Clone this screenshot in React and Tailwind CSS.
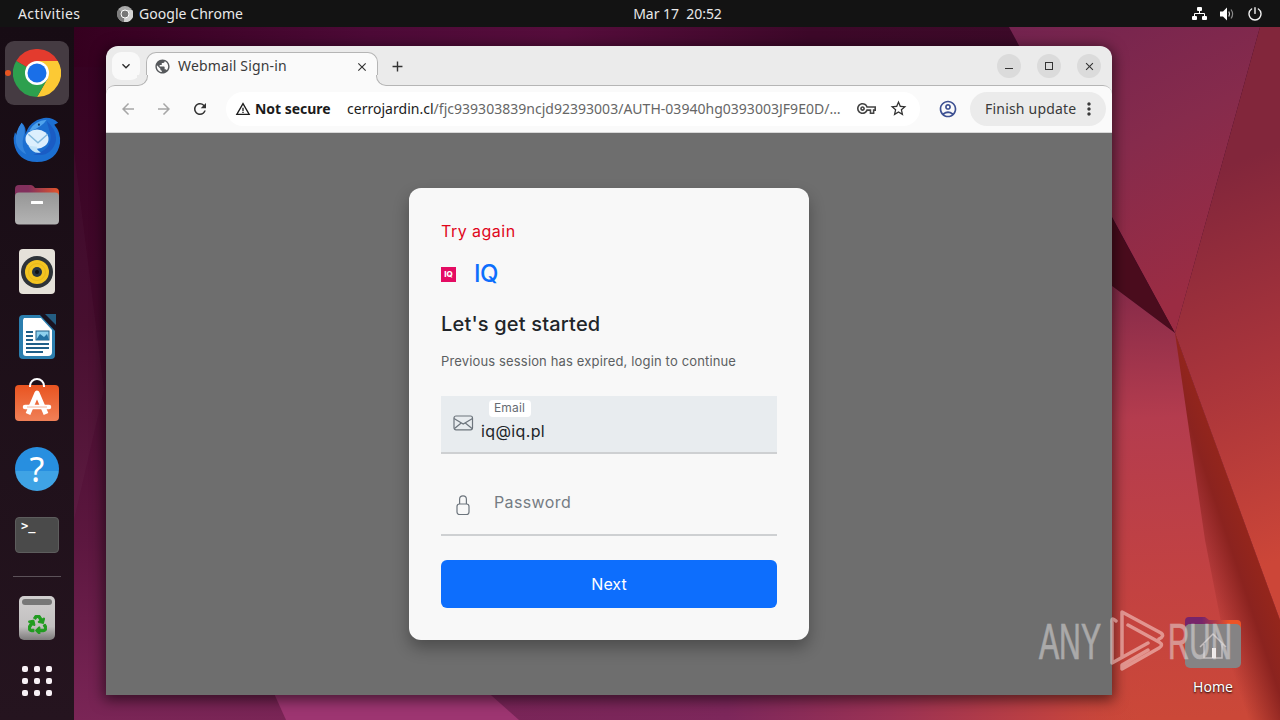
import {
  MdAdd,
  MdArrowBack,
  MdArrowForward,
  MdClose,
  MdKeyboardArrowDown,
  MdMoreVert,
  MdOutlineAccountCircle,
  MdOutlineVpnKey,
  MdPublic,
  MdRefresh,
  MdStarBorder,
  MdWarningAmber,
} from "react-icons/md";
import { FaRecycle } from "react-icons/fa";

function Wallpaper() {
  return (
    <svg
      className="absolute inset-0"
      width="1280"
      height="720"
      viewBox="0 0 1280 720"
      aria-hidden="true"
    >
      <defs>
        <linearGradient id="left" x1="0" y1="0" x2="0" y2="1">
          <stop offset="0" stopColor="#330020" />
          <stop offset="0.45" stopColor="#430a2b" />
          <stop offset="0.75" stopColor="#5c173f" />
          <stop offset="1" stopColor="#7a2556" />
        </linearGradient>
        <linearGradient id="top" x1="0" x2="1" y1="0" y2="0">
          <stop offset="0" stopColor="#35001f" />
          <stop offset="0.3" stopColor="#4d0a37" />
          <stop offset="0.5" stopColor="#560d3c" />
          <stop offset="0.75" stopColor="#3d0829" />
          <stop offset="1" stopColor="#3c0a28" />
        </linearGradient>
        <linearGradient id="plum" x1="0" y1="0" x2="0.4" y2="1">
          <stop offset="0" stopColor="#73234f" />
          <stop offset="0.5" stopColor="#862b4c" />
          <stop offset="1" stopColor="#9b2c43" />
        </linearGradient>
        <linearGradient
          id="right"
          gradientUnits="userSpaceOnUse"
          x1="1190"
          y1="180"
          x2="1330"
          y2="540"
        >
          <stop offset="0" stopColor="#82263b" />
          <stop offset="0.5" stopColor="#a8343b" />
          <stop offset="1" stopColor="#cc4638" />
        </linearGradient>
        <linearGradient
          id="coral"
          gradientUnits="userSpaceOnUse"
          x1="1130"
          y1="290"
          x2="1150"
          y2="720"
        >
          <stop offset="0" stopColor="#872b49" />
          <stop offset="0.3" stopColor="#b43c4e" />
          <stop offset="0.7" stopColor="#c34241" />
          <stop offset="1" stopColor="#cb4838" />
        </linearGradient>
        <linearGradient
          id="bottom"
          gradientUnits="userSpaceOnUse"
          x1="500"
          y1="0"
          x2="1150"
          y2="0"
        >
          <stop offset="0" stopColor="#792558" />
          <stop offset="0.35" stopColor="#7d275b" />
          <stop offset="0.6" stopColor="#9b3254" />
          <stop offset="0.85" stopColor="#bf4141" />
          <stop offset="1" stopColor="#cb4838" stopOpacity="0" />
        </linearGradient>
        <linearGradient
          id="fold"
          gradientUnits="userSpaceOnUse"
          x1="1195"
          y1="560"
          x2="1255"
          y2="540"
        >
          <stop offset="0" stopColor="#8b2420" stopOpacity="0" />
          <stop offset="0.6" stopColor="#8b231f" />
          <stop offset="1" stopColor="#96261b" />
        </linearGradient>
      </defs>
      <rect width="1280" height="720" fill="url(#left)" />
      <path d="M74 150 L104 390 L74 520Z" fill="#fff" opacity="0.025" />
      <rect x="74" y="27" width="980" height="40" fill="url(#top)" />
      <path d="M1009 27H1260L1175 333Z" fill="url(#plum)" />
      <path d="M1260 27H1280V620L1175 333Z" fill="url(#right)" />
      <path d="M1100 196L1175 333L1100 277Z" fill="#4a0c1d" />
      <path
        d="M1100 277L1175 333L1280 620V720H900V600H1100Z"
        fill="url(#coral)"
      />
      <path d="M1175 333L1280 620V720H1240L1205 540Z" fill="url(#fold)" />
      <rect x="490" y="680" width="660" height="40" fill="url(#bottom)" />
      <path d="M268 680H474L519 720H286Z" fill="#9d3571" />
    </svg>
  );
}

function TopBar() {
  return (
    <header className="absolute inset-x-0 top-0 z-20 flex h-[27px] items-center bg-[#131313] font-['Noto_Sans','Open_Sans',sans-serif] text-[14px] leading-[27px] text-[#e9e9e9]">
      <div className="flex flex-1 items-center pl-[18px]">
        <span className="w-[99px] tracking-[0.4px]">Activities</span>
        <svg width="16" height="16" viewBox="0 0 16 16">
          <circle cx="8" cy="8" r="8" fill="#a9a9a9" />
          <path d="M8 8L1.5 3.5A8 8 0 0 0 7 16Z" fill="#7c7c7c" />
          <path d="M8 4h7.3A8 8 0 0 1 7 16Z" fill="#d2d2d2" />
          <circle cx="8" cy="8" r="4" fill="#777" stroke="#fff" />
        </svg>
        <span className="ml-1.5 whitespace-nowrap tracking-[0.05px]">
          Google Chrome
        </span>
      </div>
      <div className="pl-[75px] text-center tracking-[-0.03px] whitespace-pre">
        Mar 17{"  "}20:52
      </div>
      <div className="flex flex-1 items-center justify-end gap-[13px] pr-[18px]">
        <svg width="15" height="13" viewBox="0 0 15 13" fill="#fff">
          <rect x="5" width="5" height="4" rx="1" />
          <rect y="9" width="5" height="4" rx="1" />
          <rect x="10" y="9" width="5" height="4" rx="1" />
          <path d="M7.5 4v3M2.5 9V6.5h10V9" fill="none" stroke="#fff" />
        </svg>
        <svg width="15" height="14" viewBox="0 0 15 14" fill="none">
          <path d="M0 4.5h3L7 .5v13l-4-4H0Z" fill="#fff" />
          <path d="M8.8 4.5q1.5 2.5 0 5" stroke="#ddd" strokeWidth="1.2" />
          <path d="M11 2.5q3.2 4.5 0 9" stroke="#888" strokeWidth="1.2" />
        </svg>
        <svg
          width="14"
          height="14"
          viewBox="0 0 14 14"
          fill="none"
          stroke="#f2f2f2"
          strokeWidth="1.4"
          strokeLinecap="round"
        >
          <path d="M7 .8v5.6M3.6 2A6 6 0 1 0 10.4 2" />
        </svg>
      </div>
    </header>
  );
}

const ChromeIcon = () => (
  <svg width="48" height="48" viewBox="0 0 48 48">
    <path d="M24 24L3.2 12A24 24 0 0 1 44.8 12Z" fill="#e33b2e" />
    <path d="M24 12H44.8A24 24 0 0 1 24 48L34.4 30Z" fill="#fcc934" />
    <path d="M24 24L3.2 12A24 24 0 0 0 24 48L34.4 30Z" fill="#2da04e" />
    <circle cx="24" cy="24" r="12" fill="#fff" />
    <circle cx="24" cy="24" r="9.5" fill="#1a6fe8" />
  </svg>
);

const ThunderbirdIcon = () => (
  <svg width="48" height="48" viewBox="0 0 50 48" className="mt-px">
    <path
      d="M9 6Q14 10 13 18Q17 4 32 1Q41 0 47 6L43 8Q50 16 49 27Q46 46 25 47Q4 46 1 27Q0 22 2 16L4 19Q5 12 9 6Z"
      fill="#1c6fd1"
    />
    <path d="M9 6Q14 13 11 20Q8 31 14 39Q5 35 3 26Q2 15 9 6Z" fill="#3384dd" />
    <path d="M17 14Q23 4 35 3Q31 10 18 15Z" fill="#50a3ec" />
    <path d="M35 4Q51 19 41 33Q34 42 21 39Q41 35 39 18Z" fill="#1a5cc4" />
    <ellipse cx="25" cy="23" rx="12" ry="10" fill="#dceffd" />
    <path d="M16 18L26 27L36 18" fill="none" stroke="#83b9dd" strokeWidth="1.5" />
    <path d="M16 30Q21 39 29 37Q24 34 25 31Z" fill="#c2e3f8" />
    <circle cx="27" cy="8" r="1.1" fill="#17345c" />
  </svg>
);

const FilesIcon = () => (
  <svg width="44" height="41" viewBox="0 0 44 41" className="-mt-px">
    <defs>
      <linearGradient id="files-tab">
        <stop offset="0.3" stopColor="#82305d" />
        <stop offset="1" stopColor="#e3552b" />
      </linearGradient>
      <linearGradient id="files-body" x2="0" y2="1">
        <stop stopColor="#969696" />
        <stop offset="1" stopColor="#b4b4b4" />
      </linearGradient>
    </defs>
    <path
      d="M0 5Q0 1 4 1H16Q18 1 20 4H40Q44 4 44 8V20H0Z"
      fill="url(#files-tab)"
    />
    <rect y="8.5" width="44" height="32" rx="4" fill="url(#files-body)" />
    <rect x="16" y="17" width="12" height="3" rx="0.5" fill="#fff" />
  </svg>
);

const RhythmboxIcon = () => (
  <svg width="36" height="45" viewBox="0 0 36 45">
    <rect width="36" height="45" rx="4" fill="#e5e1d9" />
    <circle cx="18" cy="23" r="16" fill="#2e3338" />
    <circle cx="18" cy="23" r="12" fill="#f3c421" />
    <circle cx="18" cy="23" r="8.5" fill="none" stroke="#e6b71e" strokeWidth="1" />
    <circle cx="18" cy="23" r="5" fill="#273542" />
    <circle cx="18" cy="23" r="2" fill="#111" />
  </svg>
);

const WriterIcon = () => (
  <svg width="37" height="46" viewBox="0 0 37 46">
    <rect y="1" width="36" height="44" rx="4" fill="#2b7eae" />
    <path d="M5 4H22L33 16V38Q33 42 29 42H7Q4 42 4 39V6Z" fill="#fff" />
    <path d="M20 0H37V18Z" fill="#1a1320" />
    <path d="M26 0H37V11Z" fill="#245d82" />
    <path
      d="M7 18h7M7 22h7M7 26h7M7 30h23M7 34h23M7 38h17"
      stroke="#205f88"
      strokeWidth="2"
    />
    <rect x="17" y="17" width="13" height="9" fill="#8dd0ee" stroke="#205f88" />
    <path d="M17 26L21 20L25 23L28 20L30 26Z" fill="#2371a3" />
  </svg>
);

const SoftwareIcon = () => (
  <svg width="44" height="44" viewBox="0 0 44 44" className="mb-[7px]">
    <defs>
      <linearGradient id="software" x2="0" y2="1">
        <stop stopColor="#e95420" />
        <stop offset="1" stopColor="#f08057" />
      </linearGradient>
    </defs>
    <rect y="7" width="44" height="36" rx="4" fill="url(#software)" />
    <path d="M15 9V8A7 7 0 0 1 29 8V9" fill="none" stroke="#fff" strokeWidth="2" />
    <path
      d="M13 36L22 15L31 36"
      fill="none"
      stroke="#fff"
      strokeWidth="5"
      strokeLinejoin="round"
    />
    <path d="M10 29H34" stroke="#fff" strokeWidth="4.5" strokeLinecap="round" />
    <path d="M12 29H32" stroke="#f2a283" strokeWidth="0.8" />
  </svg>
);

const HelpIcon = () => (
  <span className="flex size-[44px] items-center justify-center rounded-full bg-linear-to-b from-[#278fe0] from-55% to-[#3fa3e5] to-55% font-['Noto_Sans',sans-serif] text-[34px] leading-none text-white">
    ?
  </span>
);

const TerminalIcon = () => (
  <span className="flex h-9 w-11 rounded border border-[#5d5d5d] bg-[#4a4a4a] pt-[2px] pl-[5px] font-['DejaVu_Sans_Mono',monospace] text-[12px] leading-[13px] font-bold text-white">
    &gt;_
  </span>
);

const TrashIcon = () => (
  <span className="flex h-11 w-9 flex-col items-center rounded-[5px] bg-linear-to-b from-[#d1cfcf] via-[#c1bfbf] via-70% to-[#7d7b7b] pt-[3px]">
    <span className="h-[6px] w-[30px] rounded-[3px] bg-[#777]" />
    <FaRecycle
      className="mt-[10px] size-[19px] text-[#219b20]"
      stroke="#219b20"
      strokeWidth="28"
    />
  </span>
);

const dockIcons = [
  ChromeIcon,
  ThunderbirdIcon,
  FilesIcon,
  RhythmboxIcon,
  WriterIcon,
  SoftwareIcon,
  HelpIcon,
  TerminalIcon,
];

function Dock() {
  return (
    <nav className="absolute top-[27px] bottom-0 left-0 z-10 flex w-[74px] flex-col items-center bg-[#1d1018] bg-linear-to-b from-[#170c14] to-[#25141f] pt-[14px]">
      <div className="flex flex-col gap-[2px]">
        {dockIcons.map((Icon, idx) => (
          <button
            key={idx}
            className={
              idx === 0
                ? "relative flex size-16 items-center justify-center rounded-[9px] bg-[#453b42]"
                : "flex size-16 items-center justify-center"
            }
          >
            {idx === 0 && (
              <span className="absolute top-[29px] left-0 size-[6px] rounded-full bg-[#e95420]" />
            )}
            <Icon />
          </button>
        ))}
      </div>
      <div className="mt-[9px] h-px w-12 bg-[#5c5259]" />
      <button className="mt-[9px] flex size-16 items-center justify-center">
        <TrashIcon />
      </button>
      <button className="mt-4 grid grid-cols-3 gap-[6px]">
        {Array.from({ length: 9 }, (_, idx) => (
          <span key={idx} className="size-[6px] rounded-[2px] bg-[#f8f1f6]" />
        ))}
      </button>
    </nav>
  );
}

function TabStrip() {
  return (
    <div className="flex h-[39px] bg-[#ebebeb]">
      <button className="mt-[6px] ml-[6px] flex size-7 items-center justify-center rounded-[9px] bg-[#f9f9f9] text-[#2b2b2b]">
        <MdKeyboardArrowDown size={16} />
      </button>
      <div className="relative z-10 mt-[6px] -mb-px ml-[6px] flex h-[34px] w-[232px] items-center rounded-t-[10px] border border-b-0 border-[#b5b5b5] bg-[#fafafa] pr-[8px] pb-[6px] pl-[7px]">
        {/* flared feet of the active tab */}
        <span className="absolute bottom-0 -left-[10px] size-[11px] bg-[#fafafa]">
          <span className="block size-full rounded-br-[10px] border-r border-b border-[#b5b5b5] bg-[#ebebeb]" />
        </span>
        <span className="absolute -right-[10px] bottom-0 size-[11px] bg-[#fafafa]">
          <span className="block size-full rounded-bl-[10px] border-b border-l border-[#b5b5b5] bg-[#ebebeb]" />
        </span>
        <MdPublic size={17} className="text-[#55585b]" />
        <span className="mb-[2px] ml-[7px] grow text-[14px] tracking-[0.16px] text-[#3a3a3a]">
          Webmail Sign-in
        </span>
        <MdClose size={14} className="text-[#333]" />
      </div>
      <button className="mt-[12px] ml-[11px] h-4 text-[#333]">
        <MdAdd size={17} />
      </button>
      <div className="mt-[8px] mr-[11px] ml-auto flex gap-4">
        <button className="flex size-6 items-center justify-center rounded-full bg-[#dbdbdb]">
          <span className="mt-[5px] h-px w-2 bg-[#333]" />
        </button>
        <button className="flex size-6 items-center justify-center rounded-full bg-[#dbdbdb]">
          <span className="size-2 border border-[#333]" />
        </button>
        <button className="flex size-6 items-center justify-center rounded-full bg-[#dbdbdb] text-[#333]">
          <MdClose size={13} />
        </button>
      </div>
    </div>
  );
}

function Toolbar() {
  return (
    <div className="bg-[#ebebeb]">
      <div className="flex h-12 items-center rounded-t-[9px] border-t border-b border-t-[#b5b5b5] border-b-[#d8d8d8] bg-[#fafafa] pr-[6px] pb-px pl-[13px] text-[14px]">
        <MdArrowBack size={18} className="text-[#a6a6a6]" />
        <MdArrowForward size={18} className="ml-[18px] text-[#a6a6a6]" />
        <MdRefresh size={18} className="ml-[18px] text-[#333]" />
        <div className="ml-[17px] flex h-[34px] w-[694px] items-center rounded-full bg-white pl-[9px]">
          <MdWarningAmber size={16} className="text-[#1d1d1d]" />
          <span className="ml-1 w-[92px] whitespace-nowrap font-bold tracking-[-0.04px] text-[#1b1b1b]">
            Not secure
          </span>
          <span className="w-[498px] whitespace-nowrap tracking-[0.02px] text-[#666]">
            <span className="text-[#1b1b1b]">cerrojardin.cl</span>
            /fjc939303839ncjd92393003/AUTH-03940hg0393003JF9E0D/…
          </span>
          <MdOutlineVpnKey size={19} className="ml-[12px] text-[#444]" />
          <MdStarBorder size={19} className="ml-[13px] text-[#333]" />
        </div>
        <MdOutlineAccountCircle size={20} className="ml-[18px] text-[#3d5092]" />
        <button className="ml-auto flex h-[34px] w-[136px] items-center rounded-full bg-[#ebebeb] pl-[15px] text-[#3a3a3a]">
          <span className="w-[94px] text-left whitespace-nowrap tracking-[0.2px]">
            Finish update
          </span>
          <MdMoreVert size={20} />
        </button>
      </div>
    </div>
  );
}

function SignInCard() {
  return (
    <main className="flex h-[452px] w-[400px] flex-col rounded-xl bg-[#f8f8f8] p-8 font-['Inter','Open_Sans',sans-serif] text-[#212529] shadow-[0_8px_16px_rgba(0,0,0,0.3)]">
      <p className="-mt-px text-[16px] leading-6 tracking-[0.48px] text-[#e0061b]">
        Try again
      </p>
      <div className="mt-[17px] flex h-7 items-center">
        <span className="flex size-[15px] items-center justify-center bg-[#e40c63] text-[8px] leading-none font-extrabold text-white">
          IQ
        </span>
        <span className="ml-[18px] text-[24px] leading-7 font-medium tracking-[-0.5px] text-[#0d6efd]">
          IQ
        </span>
      </div>
      <h1 className="mt-6 text-[20px] leading-6 font-medium tracking-[0.18px]">
        Let&apos;s get started
      </h1>
      <p className="mt-[15px] text-[13px] leading-5 tracking-[0.15px] text-[#5c5f62]">
        Previous session has expired, login to continue
      </p>

      <label className="mt-[25px] flex h-[58px] shrink-0 border-b-2 border-[#ced0d2] bg-[#e8ecef] pl-[12px]">
        <svg
          className="mt-[19px]"
          width="21"
          height="16"
          viewBox="0 0 21 16"
          fill="none"
          stroke="#6d757d"
          strokeWidth="1.2"
        >
          <rect x="1" y="1" width="18.5" height="13.8" rx="2" />
          <path d="M1 3.5L10.2 9L19.5 3.5M1.5 13.5L8.2 8M19 13.5L12.3 8" />
        </svg>
        <div className="ml-[7px]">
          <span className="mt-1 ml-2 block h-[17px] w-[42px] rounded bg-white pl-[5px] text-[12px] leading-[16px] tracking-[0.15px] text-[#666c72]">
            Email
          </span>
          <span className="block text-[16px] leading-[29px] tracking-[0.38px]">iq@iq.pl</span>
        </div>
      </label>

      <label className="mt-6 flex h-[58px] shrink-0 border-b-2 border-[#ced0d2] pl-[15px]">
        <svg
          className="mt-[17px]"
          width="14"
          height="21"
          viewBox="0 0 14 21"
          fill="none"
          stroke="#6d757d"
          strokeWidth="1.2"
        >
          <path d="M3.6 9V4.2a3.4 3.4 0 0 1 6.8 0V9" />
          <rect x="1" y="9" width="12" height="10.5" rx="2.5" />
        </svg>
        <span className="ml-6 pt-[12px] text-[16px] leading-6 tracking-[0.38px] text-[#757c83]">
          Password
        </span>
      </label>

      <button className="mt-6 h-12 shrink-0 rounded-md bg-[#0d6efd] text-[16px] text-white">
        Next
      </button>
    </main>
  );
}

function BrowserWindow() {
  return (
    <section className="absolute top-[46px] left-[106px] flex h-[649px] w-[1006px] flex-col overflow-hidden rounded-t-xl font-['Noto_Sans','Open_Sans',sans-serif]">
      <TabStrip />
      <Toolbar />
      <div className="flex grow items-start justify-center bg-[#6e6e6e] pt-[55px]">
        <SignInCard />
      </div>
    </section>
  );
}

function HomeFolder() {
  return (
    <div className="absolute top-[617px] left-[1173px] flex w-20 flex-col items-center">
      <svg width="56" height="52" viewBox="0 0 56 52">
        <defs>
          <linearGradient id="home-tab">
            <stop offset="0.3" stopColor="#77246a" />
            <stop offset="0.8" stopColor="#ed5326" />
          </linearGradient>
        </defs>
        <path d="M0 4Q0 0 4 0H20L24 3H52Q56 3 56 7V20H0Z" fill="url(#home-tab)" />
        <rect y="7" width="56" height="44" rx="5" fill="#858384" />
        <path
          d="M15 30L28 17L41 30M19 27V41H37V27"
          fill="none"
          stroke="#c4bebe"
          strokeWidth="1.5"
        />
        <rect x="27" y="31" width="4" height="10" fill="#f4f0f0" />
      </svg>
      <span className="mt-[8px] font-['Noto_Sans',sans-serif] text-[14px] leading-5 text-white [text-shadow:0_1px_2px_#000]">
        Home
      </span>
    </div>
  );
}

function Watermark() {
  return (
    <svg
      className="absolute top-[605px] left-[1035px] z-20 overflow-visible font-['Liberation_Sans_Narrow','Liberation_Sans',sans-serif] opacity-50"
      width="210"
      height="70"
      viewBox="0 0 210 70"
      fill="#e7e4e4"
    >
      <g stroke="#e7e4e4" strokeWidth="0.7">
        <text x="4" y="54" fontSize="50" textLength="62" lengthAdjust="spacingAndGlyphs">
          ANY
        </text>
        <text x="133" y="54" fontSize="50" textLength="64" lengthAdjust="spacingAndGlyphs">
          RUN
        </text>
      </g>
      {/* play mark made of two interleaved strokes */}
      <path
        d="M93 20L124 37Q129 40 124 43L87 64V60L113 45M87 52V7L126 28Q130 31 124 34M81 16Q76 11 77 18V58L113 38"
        fill="none"
        stroke="#ffe3df"
        strokeWidth="3.5"
        strokeLinecap="round"
        strokeLinejoin="round"
      />
    </svg>
  );
}

export default function App() {
  return (
    <div className="relative h-[720px] w-[1280px] overflow-hidden bg-[#330020]">
      <Wallpaper />
      <TopBar />
      <Dock />
      <HomeFolder />
      <div className="absolute top-[46px] left-[106px] h-[649px] w-[1006px] rounded-t-xl shadow-[0_3px_14px_2px_rgba(0,0,0,0.55)]" />
      <BrowserWindow />
      <Watermark />
    </div>
  );
}
